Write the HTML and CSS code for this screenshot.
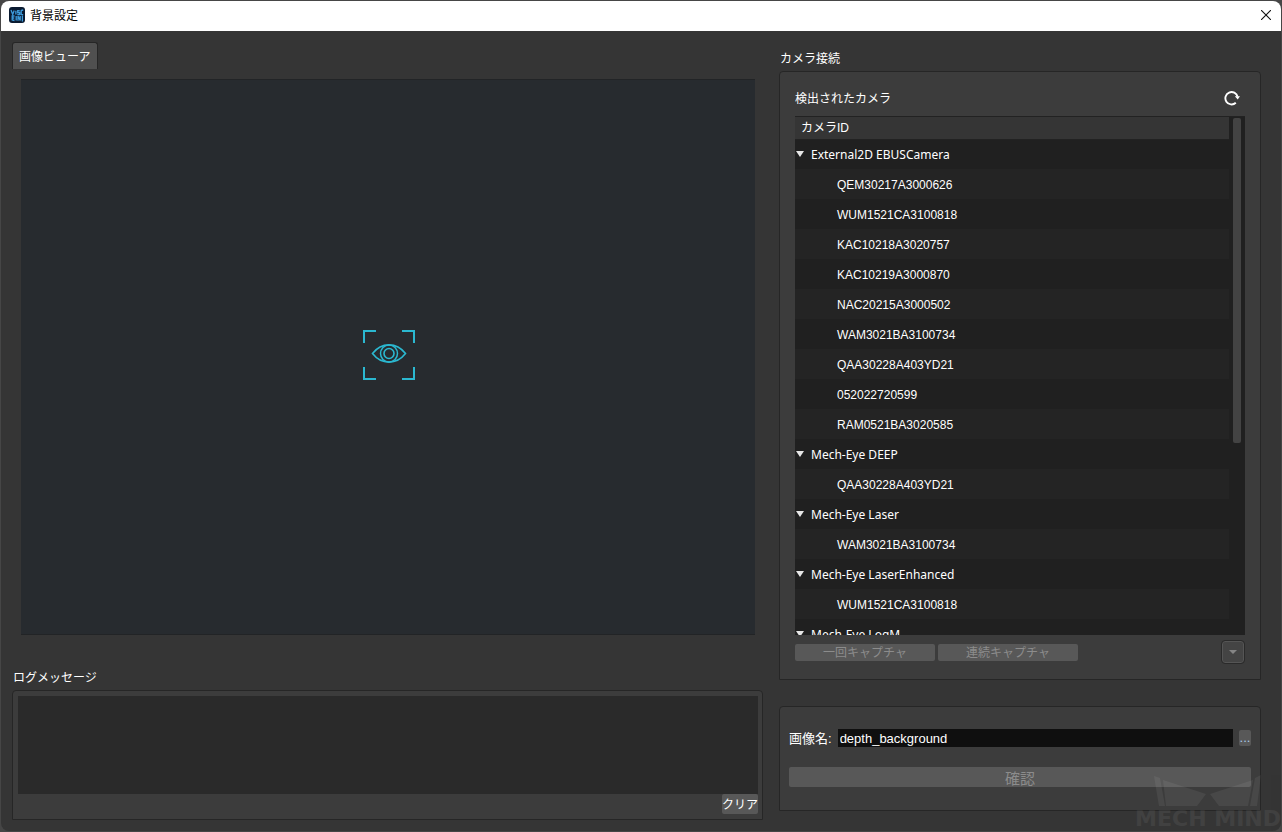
FILE: index.html
```html
<!DOCTYPE html>
<html lang="ja">
<head>
<meta charset="utf-8">
<title>背景設定</title>
<link rel="stylesheet" href="styles.css">
</head>
<body>
<div class="window">
  <header class="titlebar">
    <svg class="app-icon" viewBox="0 0 16 16" aria-hidden="true">
      <rect width="16" height="16" rx="3" fill="#0a1a30"/>
      <g fill="none" stroke="#3d9bdc" stroke-width="1.300">
        <path d="M2 3l1.700 4.500 1.500-4M6.900 3.800v3.700M10.700 3.600H8.700v1.900h2v2H8.300M14.200 3l-2 .5v3.900l2 .2"/>
        <path d="M5.500 9H3.200v4l2.300.5M3.200 11h2M7.200 9v4.500M9 13.800V9l2.200 4.500V9M13.400 8.500v6"/>
      </g>
    </svg>
    <h1 class="title">背景設定</h1>
    <button class="close" type="button" aria-label="閉じる">
      <svg viewBox="0 0 10 10" aria-hidden="true"><path d="M0 0L10 10M10 0L0 10" stroke="#111" stroke-width="1.100"/></svg>
    </button>
  </header>
  <main class="content">
    <section class="left">
      <button class="tab" type="button">画像ビューア</button>
      <div class="viewer">
        <svg class="eye" viewBox="0 0 54 52" aria-hidden="true">
          <g fill="none" stroke="#2bb8d0">
            <path stroke-width="2" d="M2 14V2h12M40 2h12v12M52 38v12H40M14 50H2V38"/>
            <path stroke-width="1.600" d="M10.500 24.500C19.500 13 34.500 13 43.500 24.500C34.500 36 19.500 36 10.500 24.500Z"/>
            <circle cx="27" cy="24.500" r="8.500" stroke-width="1.500"/>
            <circle cx="27" cy="24.500" r="5" stroke-width="1.600"/>
          </g>
        </svg>
      </div>
      <label class="caption log-caption" for="log">ログメッセージ</label>
      <div class="group log-group">
        <textarea class="log" id="log" readonly></textarea>
        <button class="button clear" type="button">クリア</button>
      </div>
    </section>
    <section class="right">
      <h2 class="caption">カメラ接続</h2>
      <div class="group camera-group">
        <div class="list-head">
          <h3 class="caption">検出されたカメラ</h3>
          <button class="refresh" type="button" aria-label="更新">
            <svg viewBox="0 0 16 16" aria-hidden="true"><path d="M11.800 12.800A6.200 6.200 0 1 1 13.600 6.800" fill="none" stroke="#fff" stroke-width="1.900"/><path d="M10.800 6.300h5.200l-2.300 3.200z" fill="#fff"/></svg>
          </button>
        </div>
        <div class="tree">
          <div class="tree-view">
            <table class="cameras">
              <thead><tr><th>カメラID</th></tr></thead>
              <tbody>
                <tr><td class="type"><span class="arrow"></span>External2D EBUSCamera</td></tr>
                <tr><td class="id">QEM30217A3000626</td></tr>
                <tr><td class="id">WUM1521CA3100818</td></tr>
                <tr><td class="id">KAC10218A3020757</td></tr>
                <tr><td class="id">KAC10219A3000870</td></tr>
                <tr><td class="id">NAC20215A3000502</td></tr>
                <tr><td class="id">WAM3021BA3100734</td></tr>
                <tr><td class="id">QAA30228A403YD21</td></tr>
                <tr><td class="id">052022720599</td></tr>
                <tr><td class="id">RAM0521BA3020585</td></tr>
                <tr><td class="type"><span class="arrow"></span>Mech-Eye DEEP</td></tr>
                <tr><td class="id">QAA30228A403YD21</td></tr>
                <tr><td class="type"><span class="arrow"></span>Mech-Eye Laser</td></tr>
                <tr><td class="id">WAM3021BA3100734</td></tr>
                <tr><td class="type"><span class="arrow"></span>Mech-Eye LaserEnhanced</td></tr>
                <tr><td class="id">WUM1521CA3100818</td></tr>
                <tr><td class="type"><span class="arrow"></span>Mech-Eye LogM</td></tr>
              </tbody>
            </table>
          </div>
          <div class="scrollbar"><div class="thumb"></div></div>
        </div>
        <div class="actions">
          <button class="button capture" type="button" disabled>一回キャプチャ</button>
          <button class="button capture" type="button" disabled>連続キャプチャ</button>
          <button class="more" type="button" disabled aria-label="その他"><span class="more-arrow"></span></button>
        </div>
      </div>
      <form class="group save-group">
        <div class="name-row">
          <label class="name-label" for="name">画像名:</label>
          <input class="name" id="name" type="text" value="depth_background">
          <button class="button browse" type="button">...</button>
        </div>
        <button class="button confirm" type="submit" disabled>確認</button>
      </form>
    </section>
  </main>
  <div class="watermark" aria-hidden="true">
    <svg class="mark" viewBox="0 0 108 32"><g fill="#fff"><path d="M0 1l6 2 5 28H5zM9 5l43 14-9 12H12zM99 5L56 19l9 12h29zM107 0l-6 3-5 28h7z"/></g></svg>
    <span>MECH MIND</span>
  </div>
</div>
</body>
</html>
```

FILE: styles.css
```css
* {
  box-sizing: border-box;
}

body {
  margin: 0;
  padding: 1px;
  height: 100vh;
  background: #464646;
  color: #fff;
  font: 12px/20px "Liberation Sans", "Noto Sans CJK JP", sans-serif;
}

h1, h2, h3 {
  margin: 0;
  font-size: 12px;
  font-weight: 400;
}

button, input, textarea {
  margin: 0;
  padding: 0;
  border: 0;
  font: inherit;
  color: inherit;
}

svg {
  display: block;
}

.window {
  position: relative;
  display: flex;
  flex-direction: column;
  height: 100%;
  border-radius: 8px;
  overflow: hidden;
  background: #353535;
}

.titlebar {
  display: flex;
  align-items: center;
  flex: none;
  height: 30px;
  padding: 0 9px 2px 8px;
  background: #fff;
  color: #000;
}

.app-icon {
  width: 16px;
  height: 16px;
  margin-right: 5px;
}

.title {
  flex: 1;
  padding-top: 2px;
}

.close {
  padding: 1px;
  background: none;
}

.close svg {
  width: 10px;
  height: 10px;
}

.content {
  display: grid;
  grid-template-columns: minmax(0, 1fr) 482px;
  gap: 16px;
  flex: 1;
  min-height: 0;
  padding: 11px 20px 11px 11px;
}

.left, .right {
  display: flex;
  flex-direction: column;
  min-height: 0;
}

.right {
  padding: 7px 0 9px;
}

.caption {
  display: block;
  padding-left: 1px;
}

.tab {
  align-self: flex-start;
  height: 27px;
  padding: 2px 6px 0;
  border: 1px solid #262626;
  border-bottom: 0;
  border-radius: 3px 3px 0 0;
  background: #505050;
}

.viewer {
  display: grid;
  place-items: center;
  flex: 1;
  margin: 10px 8px 33px 9px;
  padding: 0 0 5px 2px;
  border: solid #222426;
  border-width: 1px 0;
  background: #272b2f;
}

.eye {
  width: 54px;
  height: 52px;
}

.group {
  border: 1px solid #262626;
  border-radius: 4px 4px 0 0;
  background: #3c3c3c;
}

.log-caption {
  margin-bottom: 2px;
}

.log-group {
  display: flex;
  flex-direction: column;
  padding: 5px 4px 5px 5px;
}

.log {
  height: 98px;
  resize: none;
  background: #2a2a2a;
  outline: 0;
}

.button {
  border-radius: 2px;
  background: #585858;
}

.button:disabled {
  color: #8c8c8c;
}

.clear {
  align-self: flex-end;
  height: 20px;
  padding-top: 1px;
}

.camera-group {
  display: flex;
  flex-direction: column;
  flex: 1;
  min-height: 0;
  margin: 2px 0 26px;
  padding: 16px 15px 15px;
}

.list-head {
  display: flex;
  align-items: center;
  justify-content: space-between;
  height: 20px;
  margin-bottom: 8px;
}

.list-head .caption {
  padding: 2px 0 0;
}

.refresh {
  padding: 0 5px 0 0;
  background: none;
}

.refresh svg {
  width: 16px;
  height: 16px;
}

.tree {
  display: flex;
  flex: 1;
  min-height: 0;
  border-top: 1px solid #222;
  background: #202020;
}

.tree-view {
  flex: 1;
  overflow: hidden;
}

.cameras {
  width: 100%;
  border-collapse: collapse;
}

.cameras th {
  height: 22px;
  padding: 0 6px;
  border-bottom: 1px solid #222;
  background: #353535;
  font-weight: 400;
  text-align: left;
}

.cameras td {
  height: 30px;
  padding: 2px 0 0;
}

.cameras tbody tr:nth-child(even) {
  background: #242424;
}

.cameras .type {
  font-family: "Noto Sans", sans-serif;
}

.cameras .id {
  padding-left: 42px;
}

.arrow {
  display: inline-block;
  margin: 0 7px 2px 1px;
  border: solid transparent;
  border-width: 6px 4px 0;
  border-top-color: #e6e6e6;
}

.scrollbar {
  width: 16px;
  padding: 1px 4px;
}

.thumb {
  height: 63%;
  border-radius: 2px;
  background: #434343;
}

.actions {
  display: flex;
  align-items: center;
  gap: 3px;
  height: 22px;
  margin-top: 6px;
  margin-bottom: 1px;
}

.capture {
  width: 140px;
  height: 17px;
  padding-top: 1px;
  line-height: 17px;
}

.more {
  display: grid;
  place-items: center;
  width: 22px;
  height: 22px;
  margin: 0 1px 0 auto;
  border: 1px solid #555;
  border-radius: 3px;
  outline: 1px solid #2a2a2a;
  background: #444;
}

.more-arrow {
  border: solid transparent;
  border-width: 4px 4px 0;
  border-top-color: #858585;
}

.save-group {
  display: flex;
  flex-direction: column;
  gap: 19px;
  padding: 21px 9px 23px;
}

.name-row {
  display: flex;
  align-items: center;
  gap: 6px;
  font-size: 13px;
}

.name-label {
  height: 20px;
  line-height: 22px;
}

.name {
  flex: 1;
  min-width: 0;
  height: 18px;
  padding: 1px 2px 0;
  background: #0f0f0f;
  outline: 0;
}

.browse {
  width: 12px;
  height: 16px;
  color: #a8cbea;
  line-height: 16px;
}

.confirm {
  height: 20px;
  padding-top: 2px;
  font-size: 15px;
}

.watermark {
  position: absolute;
  right: 0;
  bottom: 0;
  display: flex;
  flex-direction: column;
  align-items: center;
  opacity: 0.06;
  font: bold 22px/24px "DejaVu Sans", sans-serif;
  pointer-events: none;
}

.mark {
  width: 108px;
  height: 32px;
}
```
